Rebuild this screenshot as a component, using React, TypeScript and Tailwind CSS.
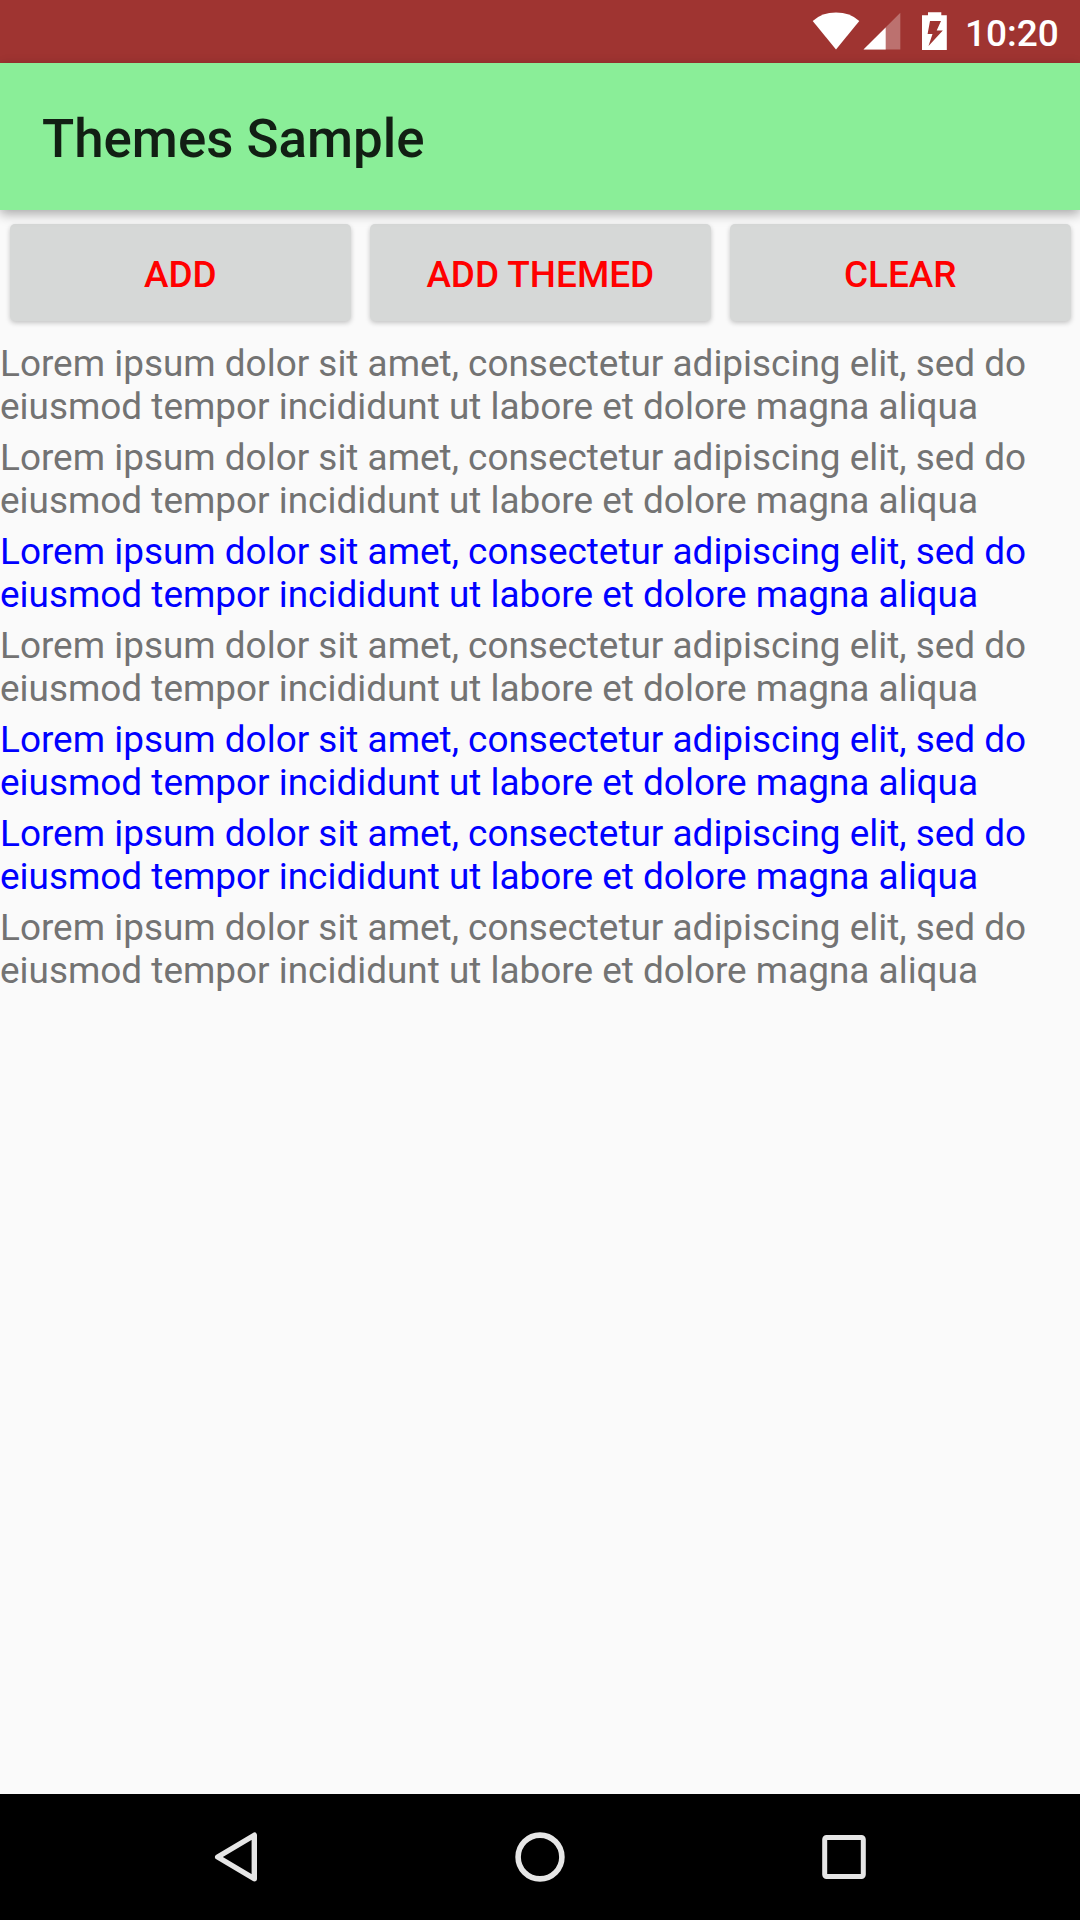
const items = [false, false, true, false, true, true, false];
const buttons = ["ADD", "ADD THEMED", "CLEAR"];

function StatusBar() {
  return (
    <header className="flex h-[63px] shrink-0 bg-[#9f3431] text-white">
      <svg className="ml-auto h-[63px] w-[140px] shrink-0" viewBox="810 0 140 63" fill="currentColor">
        <path d="M836 49.5 L812.7 21 Q822 12.6 836 12.6 Q850 12.6 859.3 21 Z" />
        <path d="M900.3 12.8 V49.6 H863.5 Z" opacity="0.3" />
        <path d="M885.7 27.4 V49.6 H863.5 Z" />
        <path
          fillRule="evenodd"
          d="M928 15.3 V12.2 H941.3 V15.3 H946.8 V50 H922 V15.3 Z M930 21 L927.6 34 H932.5 L928.5 46 L942.8 30.5 H936.7 L941 21 Z"
        />
      </svg>
      <time className="mr-[21px] ml-[15px] w-[94px] whitespace-nowrap text-[37px] leading-[68px] font-medium">10:20</time>
    </header>
  );
}

function NavBar() {
  return (
    <nav className="flex h-[126px] shrink-0 items-center bg-black pl-[213px]">
      <svg className="h-[54px] w-[46px]" viewBox="0 0 46 54" fill="none" stroke="#e6e6e6" strokeWidth="5.4" strokeLinejoin="round">
        <path d="M41.3 5.2 V48.8 L4.7 27 Z" />
      </svg>
      <svg className="ml-[254px] h-[54px] w-[54px]" viewBox="0 0 54 54" fill="none" stroke="#e6e6e6" strokeWidth="5.6">
        <circle cx="27" cy="27" r="21.9" />
      </svg>
      <svg className="ml-[250px] h-[54px] w-[54px]" viewBox="0 0 54 54" fill="none" stroke="#e6e6e6" strokeWidth="5">
        <rect x="7.7" y="7.6" width="38.6" height="38.8" rx="1.8" />
      </svg>
    </nav>
  );
}

export default function App() {
  return (
    <div className="flex h-[1920px] w-[1080px] flex-col overflow-hidden bg-[#fafafa] font-['Roboto',sans-serif]">
      <StatusBar />
      <div className="z-10 flex h-[147px] shrink-0 items-center bg-[#8aee98] pt-[5px] pl-[42px] shadow-[0_4px_11px_rgba(0,0,0,0.33)]">
        <h1 className="text-[52.85px] leading-[62px] font-medium text-[#121f14]">Themes Sample</h1>
      </div>
      <main className="flex flex-1 flex-col">
        <div className="grid grid-cols-3 pt-[14px]">
          {buttons.map((label) => (
            <div key={label} className="flex pr-[9.5px] pl-[10px]">
              <button className="h-[97px] flex-1 rounded-[5px] bg-[#d6d8d7] pt-[3px] text-[36.92px] leading-[43px] font-medium text-[#ff0000] shadow-[0_2px_5px_rgba(0,0,0,0.22)]">
                {label}
              </button>
            </div>
          ))}
        </div>
        <div className="flex flex-col gap-2 pt-[21px] text-[36.92px] leading-[43px]">
          {items.map((themed, i) => (
            <p key={i} className={themed ? "text-[#0000ff]" : "text-[#737373]"}>
              Lorem ipsum dolor sit amet, consectetur adipiscing elit, sed do eiusmod tempor incididunt ut labore et
              dolore magna aliqua
            </p>
          ))}
        </div>
      </main>
      <NavBar />
    </div>
  );
}
